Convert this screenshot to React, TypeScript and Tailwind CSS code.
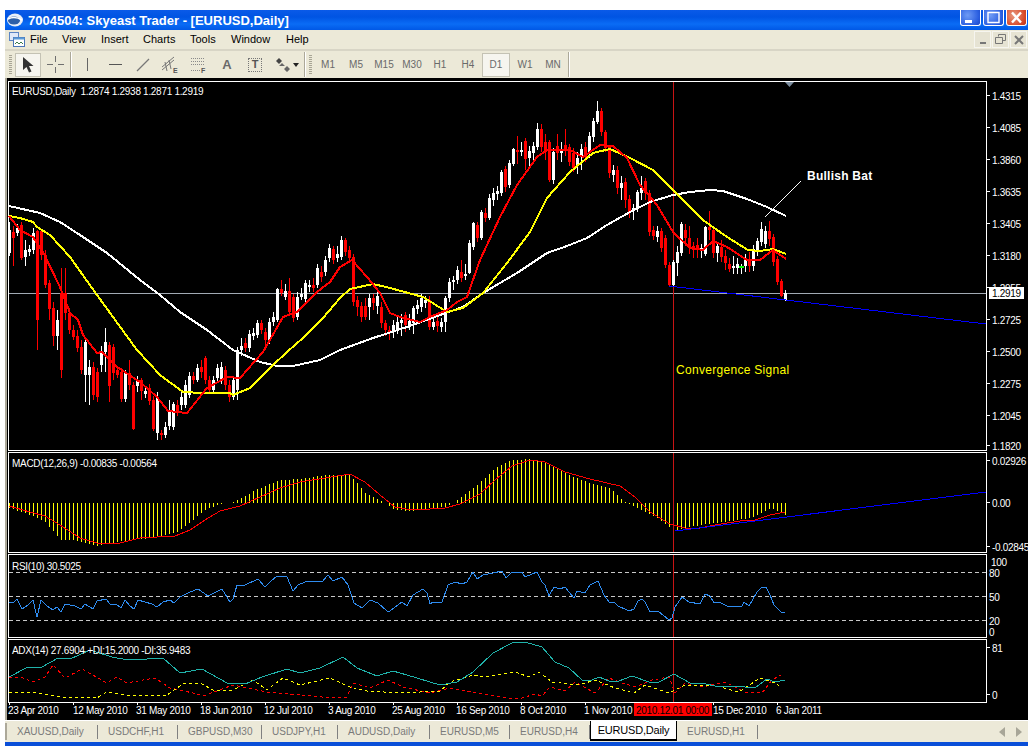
import type { ReactNode } from "react";

// x top bottom colour [high low], traced from the daily chart
const candles = `9 230 253 w 222 256,13 232 238 r 226 266,17 228 233 w 224 236,21 225 258 r 222 260,25 250 257 w 240 266,29 249 252 w 245 256,33 233 250 w 228 254,37 231 320 r 230 350,41 231 255 r 230 260,45 255 285 r 250 288,49 283 309 r 280 320,53 308 336 r 302 346,57 320 336 w 310 350,61 293 370 r 268 378,65 293 313 r 268 320,69 313 330 r 308 334,73 330 337 r 325 340,77 336 348 r 330 352,81 347 370 r 340 374,85 342 375 w 338 402,89 367 375 w 360 405,93 367 395 r 362 400,97 372 397 r 368 402,101 352 365 w 346 372,105 342 352 w 328 372,109 345 386 r 342 402,113 347 373 r 344 380,117 370 375 r 366 378,121 372 399 r 368 402,125 373 399 w 370 402,129 373 385 r 360 390,133 385 429 r 382 430,137 380 386 w 376 392,141 380 391 r 378 400,145 391 394 w 386 398,149 388 401 r 384 405,153 400 429 r 396 431,157 398 433 w 392 440,161 433 435 r 430 440,165 427 435 w 422 438,169 410 426 w 400 430,173 404 427 w 402 430,177 405 412 r 400 416,181 397 405 w 392 410,185 385 405 w 380 408,189 376 395 w 372 398,193 376 380 r 372 384,197 368 380 w 364 382,201 367 372 r 360 378,205 358 380 r 356 384,209 380 390 r 376 394,213 380 390 w 376 394,217 368 378 w 364 382,221 367 380 w 362 384,225 370 385 r 366 390,229 385 397 r 380 402,233 380 397 w 376 400,237 350 390 w 347 400,241 346 350 w 338 356,245 343 348 r 338 352,249 334 348 w 330 352,253 333 336 w 328 340,257 323 335 w 320 338,261 323 330 r 320 334,265 332 340 r 328 350,269 322 340 w 318 344,273 317 322 w 312 326,277 289 320 w 288 322,281 289 293 r 280 296,285 291 297 w 284 300,289 291 312 r 278 316,293 297 318 r 294 322,297 297 317 w 292 320,301 294 297 w 288 300,305 283 299 w 280 302,309 285 287 w 280 292,313 285 288 r 278 292,317 268 285 w 264 288,321 272 277 r 266 282,325 260 272 w 256 276,329 248 258 w 244 262,333 249 260 r 246 264,337 254 258 w 246 262,341 240 257 w 236 260,345 240 252 r 238 256,349 250 258 r 246 262,353 257 302 r 254 306,357 300 307 r 296 316,361 306 317 r 302 322,365 306 317 r 298 320,369 298 307 w 294 320,373 298 303 r 294 310,377 296 306 w 290 314,381 307 323 r 302 328,385 323 330 r 320 336,389 330 332 r 326 340,393 325 332 w 320 338,397 322 330 w 316 334,401 320 323 w 314 336,405 315 325 r 312 332,409 321 325 w 314 330,413 308 323 w 306 334,417 305 309 w 300 314,421 298 307 w 294 312,425 300 303 w 296 308,429 300 327 r 296 330,433 322 327 w 316 330,437 321 326 r 316 332,441 322 327 w 318 332,445 298 322 w 296 332,449 282 298 w 278 302,453 280 282 w 276 290,457 270 280 w 266 284,461 272 278 r 260 282,465 274 276 w 264 280,469 243 273 w 240 274,473 223 247 w 222 250,477 225 238 r 222 242,481 212 238 w 210 240,485 213 218 r 208 222,489 198 218 w 194 220,493 193 200 w 188 206,497 191 194 w 186 200,501 172 193 w 170 196,505 169 187 r 166 192,509 163 185 w 160 188,513 149 164 w 148 166,517 150 152 r 136 164,521 150 152 w 142 156,525 141 159 r 138 170,529 151 158 w 146 166,533 146 153 w 142 160,537 129 147 w 123 150,541 129 147 r 124 152,545 142 152 r 134 160,549 142 180 r 140 182,553 152 180 w 148 184,557 146 153 r 134 160,561 150 153 w 142 162,565 145 150 r 129 156,569 147 162 r 144 166,573 153 168 r 148 172,577 158 165 w 152 174,581 149 157 w 144 170,585 147 157 r 142 162,589 136 153 w 132 158,593 121 137 w 118 142,597 111 122 w 101 124,601 111 132 r 108 136,605 132 148 r 130 152,609 147 173 r 145 178,613 170 175 w 165 182,617 170 188 r 166 194,621 183 188 w 176 200,625 182 200 r 178 208,629 199 213 r 195 218,633 208 210 w 204 220,637 192 208 w 190 212,641 188 193 w 176 200,645 181 193 r 178 200,649 193 232 r 190 236,653 230 236 r 226 240,657 231 237 w 226 242,661 231 248 r 228 252,665 238 265 r 235 268,669 265 285 r 262 287,673 262 285 w 260 287,677 252 263 w 246 276,681 224 253 w 222 256,685 230 238 r 224 246,689 238 247 r 226 254,693 246 250 r 242 258,697 245 250 r 238 258,701 248 251 w 244 258,705 227 254 w 226 256,709 227 230 r 211 240,713 230 253 r 228 258,717 246 253 w 242 262,721 247 257 r 240 262,725 256 263 r 250 270,729 264 269 r 258 272,733 266 268 w 256 274,737 264 268 w 258 274,745 259 266 w 254 272,749 259 266 r 252 272,753 249 266 w 245 271,757 241 252 w 238 256,761 229 242 w 222 246,765 231 244 w 226 248,769 231 239 r 221 246,773 237 262 r 234 266,777 259 282 r 256 285,781 281 296 r 279 297,785 293 300 w 290 301`
  .split(",")
  .map((row) => row.split(" "));

const whiteMa = "9,206 40,213 60,222 80,235 107,253 140,280 160,295 180,312 207,330 233,350 260,362 277,366 293,366 320,360 340,350 373,338 407,327 440,315 463,307 483,293 517,273 547,253 567,246 587,238 607,225 630,212 650,202 673,195 690,192 710,190 723,191 747,199 767,207 786,216";
const yellowMa = "9,216 20,218 33,222 37,227 50,235 70,257 97,295 113,317 137,350 160,375 183,392 203,393 230,393 233,395 250,388 273,365 287,352 303,338 323,318 340,298 350,289 373,284 390,288 423,297 447,312 463,308 483,293 507,263 530,232 547,198 570,172 593,153 610,149 630,158 653,170 673,190 703,220 727,237 748,250 760,251 773,249 786,254";
const redMa = "9,216 20,230 33,237 43,252 60,287 70,313 78,320 83,335 97,353 102,352 117,367 140,382 157,397 168,411 187,413 207,388 227,377 240,378 263,352 283,317 297,312 317,292 330,282 340,267 352,260 367,277 380,293 390,313 400,317 420,322 430,317 447,310 457,302 467,297 480,260 500,217 517,185 537,157 547,150 570,150 583,157 600,145 613,146 627,158 640,185 657,205 673,232 690,248 703,250 713,241 727,247 747,260 760,260 773,250 786,259";

const macdHist: [number, number][] = [[9, 508], [30, 515], [45, 522], [61, 540], [75, 540], [95, 546], [110, 543], [130, 540], [150, 538], [175, 533], [190, 522], [205, 510], [220, 504], [233, 502], [240, 499], [255, 490], [280, 480], [300, 479], [325, 475], [350, 475], [365, 493], [378, 500], [385, 503], [395, 510], [410, 511], [430, 508], [445, 507], [453, 503], [460, 498], [475, 487], [495, 468], [512, 460], [530, 459], [545, 462], [570, 476], [590, 483], [610, 488], [620, 498], [627, 503], [640, 509], [660, 520], [675, 531], [685, 528], [705, 524], [730, 521], [750, 518], [760, 513], [770, 508], [780, 512], [785, 515]];
const macdSignal = "9,506 30,512 45,516 60,525 80,538 97,543 120,543 140,538 175,536 190,530 205,520 220,511 240,506 260,497 280,488 300,482 325,478 350,474 365,482 380,495 395,507 412,510 430,509 445,508 460,504 480,494 495,480 512,466 530,460 545,462 565,472 590,479 620,486 635,497 650,512 670,524 685,528 700,528 715,525 740,521 755,520 770,515 785,512";
const rsiLine = "9,602 13,603 17,599 22,609 28,605 33,600 37,617 41,600 47,606 53,610 57,607 61,612 65,604 75,606 81,609 85,604 93,609 97,601 106,599 110,604 116,604 121,608 125,600 130,606 134,609 138,600 145,602 152,604 157,607 163,602 170,600 174,603 180,597 190,592 198,589 208,596 222,589 230,602 233,599 237,585 245,585 258,579 265,587 270,582 277,576 287,577 293,591 298,585 305,582 315,581 322,582 328,575 333,581 342,577 348,585 354,603 362,608 370,600 378,603 387,611 390,611 402,602 407,606 413,595 423,589 427,593 430,604 433,602 442,602 448,585 455,582 462,584 467,582 473,572 477,579 483,575 493,573 502,571 506,578 512,572 522,572 525,577 537,572 542,582 545,585 549,596 554,587 560,589 565,587 574,598 577,591 585,593 590,585 598,581 604,595 609,602 614,602 618,606 629,611 634,609 638,601 642,599 645,602 650,612 658,611 669,620 672,618 675,607 682,597 689,602 700,604 705,594 710,596 714,603 719,602 729,607 742,606 744,602 749,606 757,592 762,587 766,587 770,595 774,605 782,613 785,612";
const adxLine = "9,677 28,667 42,667 58,658 70,659 90,650 112,657 128,660 147,659 163,658 180,673 202,669 227,683 245,684 262,677 287,669 300,673 320,668 343,657 357,668 377,676 393,671 407,675 440,685 457,682 473,672 493,653 512,643 525,642 542,647 555,662 569,668 582,680 592,680 599,677 609,681 619,681 632,676 649,682 659,682 674,674 690,683 702,683 719,687 735,686 755,688 767,679 775,682 785,680";
const adxRed = "9,677 20,677 33,682 45,677 53,665 65,678 82,669 107,683 117,677 127,683 143,680 155,678 170,688 193,693 203,696 233,685 267,692 300,695 333,698 347,697 353,683 370,688 388,680 403,687 430,693 450,688 477,693 512,699 522,698 535,694 542,696 550,687 565,691 575,682 595,693 609,678 619,682 635,687 652,680 669,677 675,693 685,683 702,687 725,682 745,692 762,693 772,680 781,675";
const adxYellow = "9,693 33,692 60,697 97,698 107,692 133,696 167,695 183,684 200,683 213,690 233,690 253,680 267,690 283,678 300,685 330,678 350,687 367,691 400,693 440,691 450,682 473,675 483,677 515,672 529,677 539,672 552,682 579,685 595,680 615,688 634,693 645,685 669,693 685,685 712,685 739,692 760,678 775,683 782,688";

const priceLabels: [string, number][] = [["1.4315", 95], ["1.4085", 127], ["1.3860", 159], ["1.3635", 191], ["1.3405", 223], ["1.3180", 255], ["1.2955", 287], ["1.2725", 319], ["1.2500", 351], ["1.2275", 383], ["1.2045", 415], ["1.1820", 445]];
const dates: [string, number, number][] = [["23 Apr 2010", 8, 9], ["12 May 2010", 73, 73], ["31 May 2010", 136, 137], ["18 Jun 2010", 200, 201], ["12 Jul 2010", 264, 265], ["3 Aug 2010", 328, 329], ["25 Aug 2010", 392, 393], ["16 Sep 2010", 456, 457], ["8 Oct 2010", 520, 521], ["1 Nov 2010", 584, 585], ["", 0, 649], ["15 Dec 2010", 713, 713], ["6 Jan 2011", 776, 777]];
const tabs = [
  { name: "XAUUSD,Daily", w: "w-[91px]" },
  { name: "USDCHF,H1", w: "w-[80px]" },
  { name: "GBPUSD,M30", w: "w-[84px]" },
  { name: "USDJPY,H1", w: "w-[76px]" },
  { name: "AUDUSD,Daily", w: "w-[92px]" },
  { name: "EURUSD,M5", w: "w-[80px]" },
  { name: "EURUSD,H4", w: "w-[80px]" },
];

function lerp(pts: [number, number][], x: number) {
  for (let i = 1; i < pts.length; i++) {
    if (x <= pts[i][0]) {
      const [x0, y0] = pts[i - 1];
      const [x1, y1] = pts[i];
      return y0 + ((y1 - y0) * (x - x0)) / (x1 - x0);
    }
  }
  return pts[pts.length - 1][1];
}

function Pane({ top, height, children }: { top: number; height: number; children: ReactNode }) {
  return (
    <svg width={1021} height={height} viewBox={`7 ${top} 1021 ${height}`} className="block shrink-0">
      {children}
    </svg>
  );
}

function Frame({ top, bottom }: { top: number; bottom: number }) {
  return <rect x={8.5} y={top + 0.5} width={978} height={bottom - top} fill="none" stroke="#fff" shapeRendering="crispEdges" />;
}

function Cross({ top, bottom }: { top: number; bottom: number }) {
  return <rect x={673} y={top} width={1} height={bottom - top} fill="#c81414" />;
}

function Line({ points, color, width = 1, dash }: { points: string; color: string; width?: number; dash?: string }) {
  return <polyline points={points} fill="none" stroke={color} strokeWidth={width} strokeDasharray={dash} shapeRendering="crispEdges" />;
}

function Label({ x, y, children, className = "fill-white" }: { x: number; y: number; children: ReactNode; className?: string }) {
  return (
    <text x={x} y={y + 1} dominantBaseline="central" className={`text-[10px] tracking-[-0.3px] ${className}`} xmlSpace="preserve">
      {children}
    </text>
  );
}

function AxisTick({ y, label }: { y: number; label: string }) {
  return (
    <g>
      <rect x={987} y={y} width={3} height={1} fill="#fff" />
      <Label x={992} y={y}>{label}</Label>
    </g>
  );
}

function Gripper() {
  return <div className="mx-[2px] h-[20px] w-[3px] bg-[repeating-linear-gradient(to_bottom,#a8a595_0,#a8a595_1px,#ece9d8_1px,#ece9d8_2px)]" />;
}

function Sep() {
  return <div className="mx-[1px] h-[25px] w-[2px] border-l border-r border-l-[#aca899] border-r-white" />;
}

function ToolBtn({ children, w = "w-[28px]", active = false }: { children: ReactNode; w?: string; active?: boolean }) {
  return (
    <div
      className={`flex h-[24px] shrink-0 items-center justify-center ${w} ${
        active ? "border border-[#c4c2b4] bg-[#f6f5ef]" : ""
      }`}
    >
      {children}
    </div>
  );
}

function XpButton({ kind }: { kind: "min" | "max" | "close" }) {
  const bg =
    kind === "close"
      ? "bg-[radial-gradient(circle_at_35%_35%,#e89a80,#d8492a_70%,#b8361c)]"
      : "bg-[radial-gradient(circle_at_35%_35%,#6f9bf5,#2a5ee0_70%,#1c47c4)]";
  return (
    <div className={`flex h-[16px] w-[21px] items-center justify-center rounded-b-[3px] border-x border-b border-white ${bg}`}>
      <svg width="15" height="13" viewBox="0 0 15 13">
        {kind === "min" && <rect x="2" y="9" width="7" height="3" fill="#fff" />}
        {kind === "max" && <path d="M2 1.5h11v10h-11z" fill="none" stroke="#fff" strokeWidth="1.4" />}
        {kind === "close" && <path d="M3 1.5l9 10M12 1.5l-9 10" stroke="#fff" strokeWidth="2.4" />}
      </svg>
    </div>
  );
}

function MdiButton({ children }: { children: ReactNode }) {
  return <div className="flex h-[17px] w-[17px] items-center justify-center border border-[#f6f5ef] bg-[#e6e3d3]">{children}</div>;
}

function MainChart() {
  return (
    <Pane top={78} height={373}>
      <Frame top={81} bottom={450} />
      <rect x={9} y={293} width={977} height={1} fill="#a2aab4" />
      <Cross top={82} bottom={450} />
      <polygon points="785,82 794,82 789.5,87" fill="#7d8ea0" />
      {candles.map(([x, t, b, c, h, l]) => {
        const color = c === "r" ? "#ff0000" : "#ffffff";
        return (
          <g key={x} shapeRendering="crispEdges">
            <rect x={+x} y={+h} width={1} height={+l - +h} fill={color} />
            <rect x={+x - 1} y={+t} width={3} height={+b - +t} fill={color} />
          </g>
        );
      })}
      <rect x={741} y={264} width={1} height={10} fill="#fff" />
      <rect x={739} y={266} width={5} height={2} fill="#00ff00" />
      <Line points={whiteMa} color="#ffffff" width={2} />
      <Line points={yellowMa} color="#ffff00" width={2} />
      <Line points={redMa} color="#ff0000" width={2} />
      <Line points="669,286 986,324" color="#0000ff" />
      <Line points="765,217 801,181" color="#ffffff" />
      <text x={807} y={176} dominantBaseline="central" className="fill-white text-[12px] font-bold tracking-[0.25px]">Bullish Bat</text>
      <text x={676} y={370} dominantBaseline="central" className="fill-[#ffff00] text-[12px] tracking-[0.3px]">Convergence Signal</text>
      <Label x={12} y={90}>EURUSD,Daily  1.2874 1.2938 1.2871 1.2919</Label>
      {priceLabels.map(([label, y]) => (
        <AxisTick key={label} y={y} label={label} />
      ))}
      <rect x={989} y={287} width={35} height={12} fill="#fff" />
      <Label x={992} y={292} className="fill-black">1.2919</Label>
    </Pane>
  );
}

function MacdChart() {
  const bars = [];
  for (let x = 9; x <= 785; x += 4) {
    const y = Math.round(lerp(macdHist, x));
    bars.push(<rect key={x} x={x} y={Math.min(y, 503)} width={1} height={Math.abs(y - 503)} fill="#ffff00" />);
  }
  return (
    <Pane top={451} height={102}>
      <Frame top={452} bottom={552} />
      <g shapeRendering="crispEdges">{bars}</g>
      <Cross top={453} bottom={552} />
      <Line points={macdSignal} color="#ff0000" />
      <Line points="675,531 986,492" color="#0000ff" />
      <Label x={12} y={462}>MACD(12,26,9) -0.00835 -0.00564</Label>
      <AxisTick y={460} label="0.02926" />
      <AxisTick y={502} label="0.00" />
      <AxisTick y={546} label="-0.02845" />
    </Pane>
  );
}

function RsiChart() {
  return (
    <Pane top={553} height={85}>
      <Frame top={554} bottom={637} />
      {[572, 596, 620].map((y) => (
        <line key={y} x1={9} x2={986} y1={y + 0.5} y2={y + 0.5} stroke="#c8c8c8" strokeDasharray="4 3" shapeRendering="crispEdges" />
      ))}
      <Cross top={555} bottom={637} />
      <Line points={rsiLine} color="#2f8cf0" />
      <Label x={12} y={565}>RSI(10) 30.5025</Label>
      <Label x={991} y={561}>100</Label>
      <Label x={989} y={572}>80</Label>
      <Label x={989} y={596}>50</Label>
      <Label x={989} y={620}>20</Label>
      <Label x={989} y={631}>0</Label>
    </Pane>
  );
}

function AdxChart() {
  return (
    <Pane top={638} height={64}>
      <rect x={8} y={639} width={979} height={1} fill="#fff" />
      <rect x={8} y={639} width={1} height={63} fill="#fff" />
      <rect x={986} y={639} width={1} height={63} fill="#fff" />
      <Cross top={640} bottom={702} />
      <Line points={adxRed} color="#ff0000" dash="3 3" />
      <Line points={adxYellow} color="#ffff00" dash="3 3" />
      <Line points={adxLine} color="#20b2aa" />
      <Label x={12} y={649}>ADX(14) 27.6904 +DI:15.2000 -DI:35.9483</Label>
      <AxisTick y={647} label="81" />
      <AxisTick y={694} label="0" />
    </Pane>
  );
}

function DateAxis() {
  return (
    <Pane top={702} height={18}>
      <rect x={8} y={702} width={979} height={1} fill="#fff" />
      {dates.map(([, , tick]) => (
        <rect key={tick} x={tick} y={702} width={1} height={3} fill="#fff" />
      ))}
      <rect x={634} y={703} width={78} height={13} fill="#ff0000" />
      <Label x={636} y={709} className="fill-black">2010.12.01 00:00</Label>
      {dates.map(([label, x]) =>
        label ? (
          <Label key={label} x={x} y={709}>
            {label}
          </Label>
        ) : null
      )}
    </Pane>
  );
}

const iconStroke = "#6f6f6f";

export default function App() {
  return (
    <div className="h-[746px] w-[1032px] overflow-hidden bg-white pl-[5px] pr-[4px] pt-[10px] font-['Liberation_Sans',sans-serif]">
      {/* Title bar */}
      <div className="flex h-[20px] items-center justify-between bg-[linear-gradient(to_bottom,#0a5ae8_0%,#0054e3_35%,#0a6cf5_70%,#0058e6_100%)] pl-[2px] pr-[1px]">
        <div className="flex items-center gap-[5px]">
          <svg width="16" height="14" viewBox="0 0 16 14">
            <ellipse cx="8" cy="7" rx="8" ry="6.5" fill="#e8eef8" />
            <ellipse cx="7" cy="7.5" rx="6" ry="4" fill="#2d5fa8" />
            <path d="M1 6c4-2 9-2 14 1" stroke="#fff" strokeWidth="1.6" fill="none" />
          </svg>
          <span className="text-[13px] font-bold leading-none text-white">7004504: Skyeast Trader - [EURUSD,Daily]</span>
        </div>
        <div className="flex items-start gap-[2px] self-start">
          <XpButton kind="min" />
          <XpButton kind="max" />
          <XpButton kind="close" />
        </div>
      </div>

      {/* Menu */}
      <div className="flex h-[21px] items-center justify-between border-b-2 border-b-[#d8d5c6] bg-[#ece9d8] pl-[4px] pr-[1px] text-[11px] text-black">
        <div className="flex items-center">
          <svg width="16" height="16" viewBox="0 0 16 16" className="mr-[5px]">
            <rect x="0.5" y="0.5" width="9" height="8" fill="#dfe9f8" stroke="#5b85c4" />
            <rect x="4.5" y="5.5" width="11" height="9" fill="#fff" stroke="#4a76b8" />
            <rect x="4.5" y="5.5" width="11" height="2" fill="#5b9bd8" />
            <path d="M6 12l2-2 2 2 2-2 2 2" stroke="#3a7a4a" fill="none" />
          </svg>
          <span className="w-[32px]">File</span>
          <span className="w-[39px]">View</span>
          <span className="w-[42px]">Insert</span>
          <span className="w-[47px]">Charts</span>
          <span className="w-[41px]">Tools</span>
          <span className="w-[55px]">Window</span>
          <span>Help</span>
        </div>
        <div className="flex gap-[1px]">
          <MdiButton>
            <div className="mt-[6px] h-[2px] w-[6px] bg-[#777]" />
          </MdiButton>
          <MdiButton>
            <svg width="11" height="11" viewBox="0 0 11 11" fill="none" stroke="#777">
              <path d="M3.5 2.5V0.5h7v6H8M0.5 3.5h7v6h-7z" />
            </svg>
          </MdiButton>
          <MdiButton>
            <svg width="10" height="10" viewBox="0 0 10 10">
              <path d="M1 1l8 8M9 1l-8 8" stroke="#777" strokeWidth="2" />
            </svg>
          </MdiButton>
        </div>
      </div>

      {/* Toolbar */}
      <div className="flex h-[27px] items-center bg-[#ece9d8] pl-[2px] text-[10px] text-[#6a6a6a]">
        <Gripper />
        <div className="w-[1px]" />
        <ToolBtn w="w-[26px]" active>
          <svg width="12" height="17" viewBox="0 0 12 17">
            <path d="M1 1v13l3.5-3 2.5 5.5 2.5-1-2.5-5.5h4.5z" fill="#333" />
          </svg>
        </ToolBtn>
        <ToolBtn>
          <svg width="17" height="17" viewBox="0 0 17 17" stroke={iconStroke}>
            <path d="M0 8.5h6M11 8.5h6M8.5 0v6M8.5 11v6" />
          </svg>
        </ToolBtn>
        <Sep />
        <ToolBtn>
          <div className="h-[13px] w-[1px] bg-[#666]" />
        </ToolBtn>
        <ToolBtn>
          <div className="h-[1px] w-[13px] bg-[#555]" />
        </ToolBtn>
        <ToolBtn>
          <svg width="14" height="14" viewBox="0 0 14 14" stroke="#777" strokeWidth="1.2">
            <path d="M1 13L13 1" />
          </svg>
        </ToolBtn>
        <ToolBtn>
          <svg width="18" height="18" viewBox="0 0 18 18" fill="none" stroke="#777">
            <path d="M0 11L12 1M0 14L12 4M3 6l2 9M7 4l2 9" />
            <text x="11" y="17" stroke="none" className="fill-[#555] text-[7px] font-bold">E</text>
          </svg>
        </ToolBtn>
        <ToolBtn>
          <svg width="18" height="16" viewBox="0 0 18 16" fill="none" stroke="#8a8a8a" strokeDasharray="1 1">
            <path d="M1 1.5h13M1 4.5h13M1 7.5h13M1 13.5h9" />
            <text x="11" y="16" stroke="none" className="fill-[#555] text-[7px] font-bold">F</text>
          </svg>
        </ToolBtn>
        <ToolBtn>
          <span className="text-[13px] font-bold text-[#6a6a6a]">A</span>
        </ToolBtn>
        <ToolBtn>
          <div className="flex h-[14px] w-[14px] items-center justify-center border border-dotted border-[#777] text-[11px] font-bold leading-none text-[#555]">
            T
          </div>
        </ToolBtn>
        <div className="w-[2px]" />
        <ToolBtn w="w-[32px]">
          <svg width="24" height="14" viewBox="0 0 24 14">
            <path d="M4 0l3 3-3 3-3-3z" fill="#444" />
            <path d="M7 5l3 3H4z M12 8l3 3-3 3-3-3z" fill="#666" />
            <path d="M18 5h6l-3 4z" fill="#222" />
          </svg>
        </ToolBtn>
        <Sep />
        <Gripper />
        {["M1", "M5", "M15", "M30", "H1", "H4"].map((p) => (
          <ToolBtn key={p}>{p}</ToolBtn>
        ))}
        <ToolBtn active>D1</ToolBtn>
        <div className="w-[1px]" />
        <ToolBtn>W1</ToolBtn>
        <ToolBtn>MN</ToolBtn>
        <Sep />
      </div>

      {/* Charts */}
      <div className="flex h-[642px] border-l-2 border-l-[#aca899] bg-black">
        <div className="flex flex-col">
          <MainChart />
          <MacdChart />
          <RsiChart />
          <AdxChart />
          <DateAxis />
        </div>
      </div>

      {/* Tabs */}
      <div className="flex h-[22px] items-center border-t border-t-white bg-[#ece9d8] text-[10px] text-[#7a7a7a]">
        <div className="h-[17px] w-[2px] bg-[#aca899]" />
        {tabs.map((tab) => (
          <div key={tab.name} className={`flex h-[14px] items-center border-r border-r-[#808080] pl-[10px] ${tab.w}`}>
            {tab.name}
          </div>
        ))}
        <div className="mb-[2px] flex h-[20px] w-[87px] items-center justify-center self-start border-x border-b-2 border-x-black border-b-black bg-white text-[11px] tracking-[-0.2px] text-black">
          EURUSD,Daily
        </div>
        <div className="flex h-[14px] w-[81px] items-center border-r border-r-[#808080] pl-[10px]">EURUSD,H1</div>
        <div className="ml-auto mr-[5px] flex gap-[9px]">
          <svg width="8" height="10" viewBox="0 0 8 10">
            <path d="M7 0v10L1 5z" fill="#a8a698" />
          </svg>
          <svg width="8" height="10" viewBox="0 0 8 10">
            <path d="M1 0v10l6-5z" fill="#a8a698" />
          </svg>
        </div>
      </div>

      {/* Window bottom edge */}
      <div className="h-[4px] bg-[#0a4fd8]" />
    </div>
  );
}
